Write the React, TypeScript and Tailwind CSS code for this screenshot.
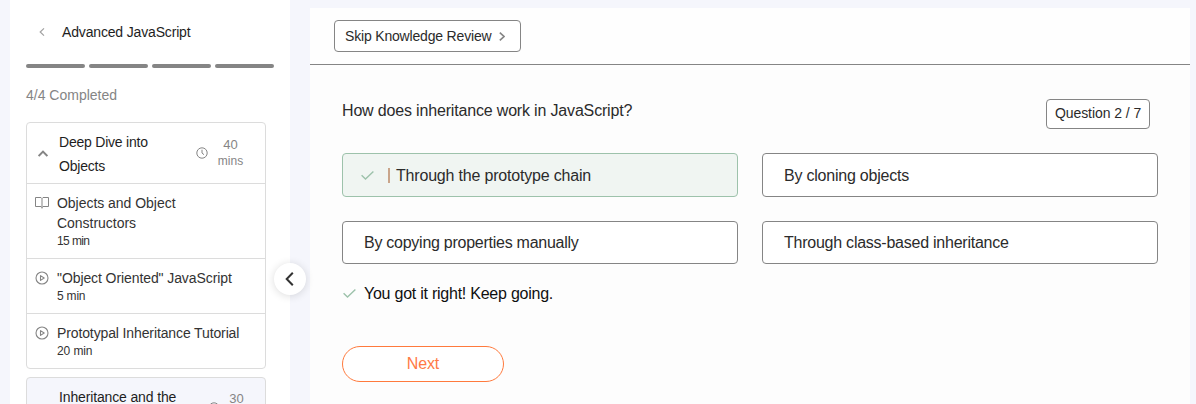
type Lesson = { kind: "read" | "video"; title: string; cls: string; time: string; timeCls: string };

const lessons: Lesson[] = [
  { kind: "read", title: "Objects and Object Constructors", cls: "w-[140px] tracking-[-0.03px]", time: "15 min", timeCls: "tracking-[-0.6px]" },
  { kind: "video", title: '"Object Oriented" JavaScript', cls: "tracking-[-0.09px]", time: "5 min", timeCls: "tracking-[-0.2px]" },
  { kind: "video", title: "Prototypal Inheritance Tutorial", cls: "tracking-[-0.12px]", time: "20 min", timeCls: "tracking-[-0.1px]" },
];

function BookIcon() {
  return (
    <svg className="mt-[3px] h-[14px] w-[14px] shrink-0" viewBox="0 0 14 14" fill="none" stroke="#858585" strokeWidth="1">
      <path d="M7 2.500 6 1.500H.5v9H6l1 1 1-1h5.500v-9H8L7 2.500V12.500" />
    </svg>
  );
}

function PlayIcon() {
  return (
    <svg className="mt-[3px] h-[14px] w-[14px] shrink-0" viewBox="0 0 14 14" fill="none" stroke="#858585" strokeWidth="1.1" strokeLinejoin="round">
      <circle cx="7" cy="7" r="6" />
      <path d="M5.500 4.600v4.800L9.200 7z" />
    </svg>
  );
}

function ClockIcon() {
  return (
    <svg className="h-3 w-3 shrink-0" viewBox="0 0 12 12" fill="none" stroke="#858585" strokeWidth="1">
      <circle cx="6" cy="6" r="5.200" />
      <path d="M6 2.700V6l2 1.700" />
    </svg>
  );
}

function CheckIcon() {
  return (
    <svg className="h-[9px] w-[13px] shrink-0" viewBox="0 0 13 9" fill="none" stroke="#9dc2ab" strokeWidth="1.4">
      <path d="M.6 4.200 4.500 8 12.400.6" />
    </svg>
  );
}

function Sidebar() {
  return (
    <aside className="h-[404px] w-[280px] shrink-0 overflow-hidden bg-white pl-4">
      <div className="flex h-16 items-center">
        <svg className="ml-[13px] h-[8px] w-[6px]" viewBox="0 0 6 8" fill="none" stroke="#a3a3a3" strokeWidth="1.200">
          <path d="M5 .4 1.200 4 5 7.600" />
        </svg>
        <span className="ml-[17px] text-[14px] tracking-[-0.16px] text-[#1e1e1e]">Advanced JavaScript</span>
      </div>
      <div className="flex gap-1">
        <span className="h-1 w-[59px] rounded-full bg-[#858585]" />
        <span className="h-1 w-[59px] rounded-full bg-[#858585]" />
        <span className="h-1 w-[59px] rounded-full bg-[#858585]" />
        <span className="h-1 w-[59px] rounded-full bg-[#858585]" />
      </div>
      <p className="mt-[17px] text-[14px] leading-5 text-[#858585]">4/4 Completed</p>

      <section className="mt-[17px] w-[240px] rounded-[4px] border border-[#dcdcdc]">
        <div className="flex h-[61px] items-center border-b border-[#dcdcdc]">
          <svg className="ml-[11px] h-[7px] w-[10px]" viewBox="0 0 10 7" fill="none" stroke="#858585" strokeWidth="2">
            <path d="M.6 6 5 1.600 9.400 6" />
          </svg>
          <h3 className="ml-[11px] w-[120px] pt-[2px] text-[14px] leading-6 tracking-[-0.22px] text-[#1e1e1e]">Deep Dive into Objects</h3>
          <span className="ml-[17px] flex"><ClockIcon /></span>
          <span className="ml-[9px] flex w-[27px] flex-col items-center leading-4 text-[#858585]">
            <span className="text-[13px]">40</span>
            <span className="text-[12px]">mins</span>
          </span>
        </div>
        {lessons.map((l) => (
          <div key={l.title} className="flex gap-2 border-b border-[#dcdcdc] py-[9px] pl-2 last:border-b-0">
            {l.kind === "read" ? <BookIcon /> : <PlayIcon />}
            <div className="text-[#333333]">
              <p className={`text-[14px] leading-5 ${l.cls}`}>{l.title}</p>
              <p className={`text-[12px] leading-4 ${l.timeCls}`}>{l.time}</p>
            </div>
          </div>
        ))}
      </section>

      <section className="mt-2 h-[63px] w-[240px] rounded-[4px] border border-[#dcdcdc] bg-[#f5f6fc]">
        <div className="flex pt-[7px]">
          <h3 className="ml-8 w-[135px] text-[14px] leading-6 tracking-[-0.14px] text-[#1e1e1e]">Inheritance and the</h3>
          <span className="mt-[17px] ml-[14px] flex"><ClockIcon /></span>
          <span className="mt-[6px] ml-[3px] w-[27px] text-center text-[13px] leading-4 text-[#858585]">30</span>
        </div>
      </section>
    </aside>
  );
}

const optionBase = "flex items-center rounded-[4px] border text-[16px] text-[#2b2b2b]";

export default function App() {
  return (
    <div className="relative flex h-[404px] w-[1196px] overflow-hidden bg-[#f5f6fc] pl-[10px] font-['Liberation_Sans',Arial,sans-serif]">
      <Sidebar />
      <main className="mt-2 ml-5 h-[396px] w-[880px] shrink-0 bg-[#fdfdfd]">
        <header className="flex h-[57px] items-center border-b border-[#858585] bg-[#fefefe] pl-6">
          <button className="flex h-8 w-[187px] items-center rounded-[4px] border border-[#858585] bg-white pl-[10px] text-[14px] text-[#2b2b2b]">
            <span className="tracking-[-0.18px]">Skip Knowledge Review</span>
            <svg className="ml-[8px] h-[9px] w-[6px]" viewBox="0 0 6 9" fill="none" stroke="#858585" strokeWidth="1.600">
              <path d="M.8.600 5 4.500 .8 8.400" />
            </svg>
          </button>
        </header>

        <div className="pr-8 pl-8">
          <div className="flex items-start justify-between pt-[34px] pr-2">
            <h1 className="text-[16px] leading-6 tracking-[-0.17px] text-[#2b2b2b]">How does inheritance work in JavaScript?</h1>
            <span className="flex h-[30px] w-[104px] items-center justify-center rounded-[4px] border border-[#858585] bg-white pb-[2px] text-[14px] tracking-[-0.07px] text-[#2b2b2b]">Question 2 / 7</span>
          </div>

          <div className="mt-6 grid grid-cols-2 gap-x-6 gap-y-6">
            <div className={`${optionBase} h-11 border-[#9dc2ab] bg-[#f0f5f2] pt-px pl-[18px]`}>
              <CheckIcon />
              <span className="mb-px ml-[14px] h-[15px] w-[2px] bg-[#c9a58b]" />
              <span className="ml-[6px] pt-px tracking-[-0.19px]">Through the prototype chain</span>
            </div>
            <div className={`${optionBase} h-11 border-[#858585] bg-white pt-[2px] pl-[21px] tracking-[-0.22px]`}>By cloning objects</div>
            <div className={`${optionBase} h-[43px] border-[#858585] bg-white pl-[21px] tracking-[-0.26px]`}>By copying properties manually</div>
            <div className={`${optionBase} h-[43px] border-[#858585] bg-white pl-[21px] tracking-[-0.24px]`}>Through class-based inheritance</div>
          </div>

          <div className="mt-[17px] flex h-6 items-center pl-[1px]">
            <CheckIcon />
            <span className="ml-[8px] pt-[2px] text-[16px] tracking-[-0.24px] text-[#0f0f0f]">You got it right! Keep going.</span>
          </div>

          <button className="mt-[41px] flex h-9 w-[162px] items-center justify-center rounded-full border border-[#ff7a3d] bg-white pb-px text-[16px] tracking-[-0.15px] text-[#ff7a45]">Next</button>
        </div>
      </main>
      <button aria-label="Collapse" className="absolute top-[263px] left-[274px] flex h-8 w-8 items-center justify-center rounded-full bg-white pr-px shadow-[0_1px_8px_rgba(0,0,0,0.14)]">
        <svg className="h-[14px] w-[9px]" viewBox="0 0 9 14" fill="none" stroke="#333333" strokeWidth="2">
          <path d="M7.800.8 1.700 7l6.100 6.200" />
        </svg>
      </button>
    </div>
  );
}
